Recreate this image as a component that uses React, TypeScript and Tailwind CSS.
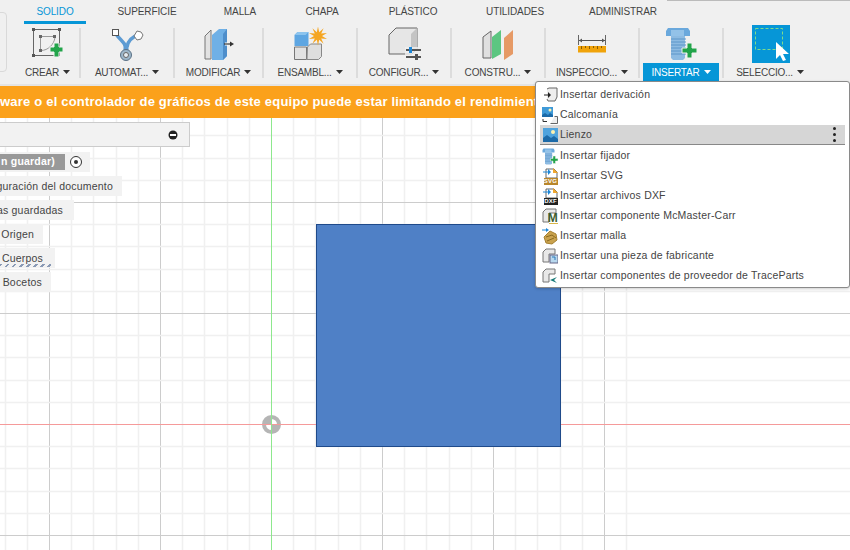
import React from "react";

const FONT = "font-['Liberation_Sans',Arial,sans-serif]";

function Caret({ white }: { white?: boolean }) {
  return (
    <svg width="7" height="4" viewBox="0 0 7 4" className="ml-[4px] shrink-0">
      <path d="M0 0h7L3.500 4z" fill={white ? "#fff" : "#333"} />
    </svg>
  );
}

function CreateIcon() {
  return (
    <svg width="34" height="34" viewBox="0 0 34 34">
      <rect x="2.500" y="2.500" width="26" height="26" fill="none" stroke="#666" />
      <path d="M9.500 10v14M9.500 9.500h13M10 23.500c7 0 13-6 14-13" fill="none" stroke="#999" />
      <rect x="1" y="1" width="3" height="3" fill="#555" />
      <rect x="27" y="1" width="3" height="3" fill="#555" />
      <rect x="1" y="27" width="3" height="3" fill="#555" />
      <rect x="8" y="8" width="3" height="3" fill="#666" />
      <rect x="8" y="22" width="3" height="3" fill="#666" />
      <rect x="22" y="8" width="3" height="3" fill="#666" />
      <path d="M22.500 18.500h4v-4h5v4h4v5h-4v5h-5v-5h-4z" transform="translate(-3.500 1.500)" fill="#22a44a" stroke="#f0f0f0" />
    </svg>
  );
}

function AutoIcon() {
  return (
    <svg width="34" height="36" viewBox="0 0 34 36">
      <path d="M6 8c4 6 8 7 10 13M28 9c-6 2-10 5-11 12" fill="none" stroke="#5d9bd3" strokeWidth="3.500" />
      <path d="M16 18v10" stroke="#5d9bd3" strokeWidth="5" />
      <rect x="2.500" y="3.500" width="6" height="6" fill="#fff" stroke="#555" />
      <path d="M27 5l4 1 2 3-2 4-4 1-3-4z" fill="#fff" stroke="#777" />
      <circle cx="16" cy="29" r="5.500" fill="#9db6c9" stroke="#5a7186" />
      <circle cx="16" cy="29" r="2.500" fill="#e6edf2" stroke="#666" />
    </svg>
  );
}

function ModifyIcon() {
  return (
    <svg width="30" height="34" viewBox="0 0 30 34">
      <path d="M1 9l6-6v29H1z" fill="#e2e2e2" stroke="#777" />
      <path d="M8 8l7-6h8v27l-4 4H8z" fill="#6fb0e6" />
      <path d="M19 7l4-5v27l-4 4z" fill="#4e8ecb" />
      <path d="M21 17h3" stroke="#fff" strokeWidth="3" />
      <path d="M20 17h7" stroke="#333" strokeWidth="1.200" />
      <path d="M26 14.500l4 2.500-4 2.500z" fill="#333" />
    </svg>
  );
}

function starPoints(cx: number, cy: number, r1: number, r2: number, n: number) {
  const pts: string[] = [];
  for (let i = 0; i < n * 2; i++) {
    const r = i % 2 === 0 ? r1 : r2;
    const a = (Math.PI * i) / n - Math.PI / 2;
    pts.push(`${(cx + r * Math.cos(a)).toFixed(1)},${(cy + r * Math.sin(a)).toFixed(1)}`);
  }
  return pts.join(" ");
}

function AssembleIcon() {
  return (
    <svg width="34" height="34" viewBox="0 0 34 34">
      <path d="M1.500 8l3-3h11v14H1.500z" fill="#5ea6e2" />
      <path d="M4.500 5h11l-3 3h-11z" fill="#8cc4ee" />
      <path d="M1.500 20h12v12.500H1.500z" fill="#e2e2e2" stroke="#777" />
      <path d="M14.500 20l3-3h11v12.500l-3 3h-11.500z" fill="#dedede" stroke="#888" />
      <polygon points={starPoints(25, 9, 9.500, 4, 10)} fill="#f5a623" />
    </svg>
  );
}

function ConfigIcon() {
  return (
    <svg width="34" height="34" viewBox="0 0 34 34">
      <path d="M2 8l7-7h21v21l-5 5H2z" fill="#e6e6e6" stroke="#666" />
      <path d="M24 7l6-6v21l-6 5z" fill="#c4c4c4" />
      <rect x="18" y="20" width="16" height="13" fill="#f0f0f0" opacity=".8" />
      <path d="M19 23h15M19 30h15" stroke="#555" strokeWidth="2" />
      <rect x="22" y="20" width="3" height="6" fill="#1e88d8" />
      <rect x="28" y="27" width="3" height="6" fill="#555" />
    </svg>
  );
}

function ConstructIcon() {
  return (
    <svg width="32" height="32" viewBox="0 0 32 32">
      <path d="M1 9l8-6v27H1z" fill="#e0e0e0" stroke="#666" />
      <path d="M10 9l9-7v24l-9 5z" fill="#5cc681" />
      <path d="M22 10l9-8v24l-9 6z" fill="#e69a66" />
    </svg>
  );
}

function InspectIcon() {
  return (
    <svg width="30" height="20" viewBox="0 0 30 20">
      <path d="M1.500 1v10M28.500 1v10" stroke="#666" />
      <path d="M2 6.500h26" stroke="#555" />
      <path d="M2 6.500l3-2v4zM28 6.500l-3-2v4z" fill="#555" />
      <rect x="1" y="12" width="28" height="6.500" fill="#f0a30a" />
      <path d="M4.500 12v3M8.500 12v2M12.500 12v3M16.500 12v2M20.500 12v3M24.500 12v2" stroke="#8a5c00" />
    </svg>
  );
}

function BoltIcon({ small }: { small?: boolean }) {
  return (
    <svg width={small ? 16 : 32} height={small ? 17 : 34} viewBox="0 0 32 34">
      <path d="M1 4l2-3h20l2 3v5H1z" fill="#6aa8dc" />
      <path d="M6 3h13v6H6z" fill="#93c2e8" />
      <path d="M6 9h14v22l-2 2H8l-2-2z" fill="#8dbbe2" />
      <path d="M6 12h15M6 15h15M6 18h15M6 21h15M6 24h15M6 27h15" stroke="#5d96c9" />
      <path d="M17 21h5v-5h5v5h5v5h-5v5h-5v-5h-5z" fill="#22a44a" stroke="#f0f0f0" />
    </svg>
  );
}

function SelectIcon() {
  return (
    <div className="w-[38px] h-[38px] bg-[#0696d7] ml-[2px]">
      <svg width="38" height="38" viewBox="0 0 38 38">
        <rect x="3.500" y="3.500" width="27" height="21" fill="none" stroke="#7fdc8a" strokeDasharray="3 2" />
        <path d="M24 17v17l4-4 3 6 3-1-3-6h6z" fill="#fff" />
      </svg>
    </div>
  );
}

function Tool({ w, label, icon, active, sep = true }: { w: string; label: string; icon: React.ReactNode; active?: boolean; sep?: boolean }) {
  return (
    <div className={`${w} pr-[2px] relative flex flex-col items-center h-full shrink-0`}>
      <div className="h-[39px] flex items-center justify-center">{icon}</div>
      {active ? (
        <div className="w-[76px] h-[18px] bg-[#0696d7] text-white flex items-center justify-center text-[10px] tracking-[-0.2px]">
          {label}
          <Caret white />
        </div>
      ) : (
        <div className="h-[18px] flex items-center justify-center text-[10px] tracking-[-0.2px] text-[#444]">
          {label}
          <Caret />
        </div>
      )}
      {sep && <div className="absolute right-0 top-[4px] h-[50px] w-[2px] bg-[#dcdcdc]" />}
    </div>
  );
}

function Row({ icon, label, active }: { icon: React.ReactNode; label: string; active?: boolean }) {
  return (
    <div className={`h-[20px] mx-[4px] flex items-center text-[10.500px] tracking-[0.2px] text-[#444] ${active ? "bg-[#d6d6d6] border-b border-[#888]" : ""}`}>
      <div className="w-[20px] h-[18px] flex items-center justify-center shrink-0">{icon}</div>
      <span className="flex-1">{label}</span>
      {active && (
        <div className="w-[3px] flex flex-col gap-[3px] mr-[9px]">
          <div className="w-[3px] h-[3px] rounded-full bg-[#222]" />
          <div className="w-[3px] h-[3px] rounded-full bg-[#222]" />
          <div className="w-[3px] h-[3px] rounded-full bg-[#222]" />
        </div>
      )}
    </div>
  );
}

const Derive = () => (
  <svg width="16" height="16" viewBox="0 0 16 16">
    <path d="M5 2l2-1h8v9l-2 4H6l-1-2" fill="#eee" stroke="#666" />
    <path d="M2 8h6" stroke="#222" />
    <path d="M6 5l3 3-3 3z" fill="#222" />
  </svg>
);
const Decal = () => (
  <svg width="17" height="17" viewBox="0 0 17 17">
    <rect x="0" y="0" width="11" height="10" fill="#3f9ad8" />
    <path d="M0 10V8l3-2 3 2 2-2 3 2v2z" fill="#1c6aa8" />
    <circle cx="8" cy="3" r="1.500" fill="#fff3b0" />
    <path d="M8.500 16.500h7v-7h-3" fill="#eee" stroke="#666" />
    <path d="M1 12v2.500h4" fill="none" stroke="#333" />
  </svg>
);
const Canvas = () => (
  <svg width="15" height="14" viewBox="0 0 15 14">
    <rect width="15" height="14" fill="#4fa3dd" />
    <path d="M0 14v-4l4-3 4 3 3-2 4 3v3z" fill="#1c6aa8" />
    <circle cx="10" cy="4" r="2" fill="#fff3b0" />
  </svg>
);
const FileIcon = ({ tag, bg }: { tag: string; bg: string }) => (
  <div className="relative w-[15px] h-[17px]">
    <svg width="15" height="10" viewBox="0 0 15 10" className="absolute top-0 left-0">
      <path d="M3 1h8l3 3v6H3z" fill="#fff" stroke="#666" />
      <path d="M10 0l5 5h-5z" fill="#f0a830" />
      <path d="M0 4h6" stroke="#1e88d8" />
      <path d="M5 1l3 3-3 3z" fill="#1e88d8" />
    </svg>
    <div className={`absolute bottom-0 left-[1px] right-0 h-[7px] ${bg} text-white text-[6px] leading-[7px] font-bold text-center`}>{tag}</div>
  </div>
);
const McMaster = () => (
  <div className="relative w-[16px] h-[16px]">
    <svg width="16" height="16" viewBox="0 0 16 16" className="absolute inset-0">
      <path d="M1 4l3-3h10v4H7v9H1z" fill="#e8e8e8" stroke="#777" />
      <path d="M7 15.500h9" stroke="#d9b84a" />
    </svg>
    <span className="absolute right-[0px] bottom-[0px] text-[12px] leading-[12px] font-bold text-[#3d5c2e]">M</span>
  </div>
);
const MeshIcon = () => (
  <svg width="16" height="17" viewBox="0 0 16 17">
    <path d="M8 3l6 3 1 6-5 4-6-1-2-6z" fill="#c9a24e" stroke="#a58030" />
    <path d="M4 9l6-2 4 3M5 13l7-3" stroke="#8a6a20" fill="none" />
    <path d="M0 2h5" stroke="#1e88d8" />
    <path d="M4 0l3 2-3 2z" fill="#1e88d8" />
  </svg>
);
const Maker = ({ teal }: { teal?: boolean }) => (
  <svg width="16" height="16" viewBox="0 0 16 16">
    <path d="M1 4l3-3h9v5H7v8H1z" fill="#e8e8e8" stroke="#777" />
    {teal ? (
      <path d="M8 12l7-3-3 3 3 3z" fill="#177a78" />
    ) : (
      <>
        <rect x="8" y="7" width="8" height="8" fill="#b8d8ee" stroke="#668" />
        <path d="M10 9h3v3" stroke="#2a78b8" fill="none" />
      </>
    )}
  </svg>
);

function TreeRow({ w, children }: { w: string; children: React.ReactNode }) {
  return (
    <div className={`${w} h-[20px] pt-[2px] bg-[#f2f2f2] flex items-center justify-end whitespace-nowrap text-[10.500px] tracking-[0.2px] text-[#444]`}>
      {children}
    </div>
  );
}

const XS = Array.from({ length: 30 }, (_, i) => Math.round(271 + (i - 13) * 22.2) + 0.5);
const YS = Array.from({ length: 30 }, (_, i) => Math.round(424 + (i - 15) * 22.2) + 0.5);

const TABS: [string, string][] = [
  ["SOLIDO", "w-[92px]"],
  ["SUPERFICIE", "w-[92px]"],
  ["MALLA", "w-[94px]"],
  ["CHAPA", "w-[70px]"],
  ["PLÁSTICO", "w-[112px]"],
  ["UTILIDADES", "w-[92px]"],
  ["ADMINISTRAR", "w-[124px]"],
];

export default function App() {
  return (
    <div className={`w-[850px] h-[550px] overflow-hidden relative flex flex-col bg-white ${FONT}`}>
      {/* tabs */}
      <div className="h-[24px] bg-[#f0f0f0] flex pl-[9px] text-[10px] tracking-[-0.1px] text-[#444] shrink-0 relative">
        {TABS.map(([t, w], i) => (
          <div key={t} className={`${w} h-[24px] pt-[5px] leading-[14px] text-center ${i === 0 ? "text-[#0696d7]" : ""}`}>{t}</div>
        ))}
        <div className="absolute left-[24px] top-[21px] w-[62px] h-[3px] bg-[#0696d7]" />
        <div className="absolute left-[667px] right-0 top-0 h-[1px] bg-[#bbbbbb]" />
      </div>
      {/* toolbar */}
      <div className="h-[62px] bg-[#f0f0f0] border-b-2 border-[#e4e4e4] flex shrink-0 relative">
        <div className="absolute left-[-10px] top-[-12px] w-[17px] h-[60px] border border-[#d9d9d9] rounded-[4px]" />
        <Tool w="w-[81px] pl-[16px]" label="CREAR" icon={<CreateIcon />} />
        <Tool w="w-[94px]" label="AUTOMAT..." icon={<AutoIcon />} />
        <Tool w="w-[89px]" label="MODIFICAR" icon={<ModifyIcon />} />
        <Tool w="w-[94px]" label="ENSAMBL..." icon={<AssembleIcon />} />
        <Tool w="w-[94px]" label="CONFIGUR..." icon={<ConfigIcon />} />
        <Tool w="w-[94px]" label="CONSTRU..." icon={<ConstructIcon />} />
        <Tool w="w-[94px]" label="INSPECCIO..." icon={<InspectIcon />} />
        <Tool w="w-[84px]" label="INSERTAR" icon={<BoltIcon />} active />
        <Tool w="w-[94px]" label="SELECCIO..." icon={<SelectIcon />} sep={false} />
      </div>
      {/* banner */}
      <div className="h-[32px] bg-[#fba11b] text-white font-bold text-[13px] tracking-[0.2px] flex items-center whitespace-nowrap overflow-hidden shrink-0">
        ware o el controlador de gráficos de este equipo puede estar limitando el rendimiento
      </div>
      {/* canvas */}
      <div className="flex-1 relative bg-white overflow-hidden">
        <svg width="850" height="432" viewBox="0 118 850 432" className="absolute inset-0">
          {XS.map((x, i) => (
            <line key={i} x1={x} x2={x} y1="118" y2="550" stroke={(i - 13) % 5 === 0 ? "#cccccc" : "#f0f0f0"} strokeWidth={(i - 13) % 5 === 0 ? 1 : 1.500} />
          ))}
          {YS.map((y, i) => (
            <line key={i} y1={y} y2={y} x1="0" x2="850" stroke={(i - 15) % 5 === 0 ? "#cccccc" : "#f0f0f0"} strokeWidth={(i - 15) % 5 === 0 ? 1 : 1.500} />
          ))}
          <line x1="0" x2="850" y1="424.500" y2="424.500" stroke="#f59a9a" />
          <line x1="271.500" x2="271.500" y1="118" y2="550" stroke="#8de88d" />
          <circle cx="271.500" cy="424.500" r="7.500" fill="none" stroke="#b5b5b5" strokeWidth="4" />
          <path d="M271.500 424.500v-7a7 7 0 0 0-7 7zM271.500 424.500v7a7 7 0 0 0 7-7z" fill="#b5b5b5" />
          <line x1="262" x2="281" y1="424.500" y2="424.500" stroke="#f59a9a" />
          <line x1="271.500" x2="271.500" y1="415" y2="434" stroke="#8de88d" />
          <rect x="316.500" y="224.500" width="244" height="222" fill="#4f80c6" stroke="#1f4a8a" />
        </svg>
        {/* browser */}
        <div className="absolute left-0 top-[4px] flex flex-col items-start">
          <div className="w-[190px] h-[25px] bg-[#f2f2f2] border border-l-0 border-[#cccccc] flex items-center justify-end pr-[11px]">
            <svg width="10" height="10" viewBox="0 0 10 10"><circle cx="5" cy="5" r="4.500" fill="#222" /><rect x="2" y="4" width="6" height="2" fill="#fff" /></svg>
          </div>
          <div className="mt-[5px] w-[90px] h-[20px] bg-[#f2f2f2] flex items-center justify-start">
            <div className="w-[65px] h-[16px] bg-[#999999] text-white font-bold text-[10.500px] tracking-[0.2px] flex items-center justify-end pr-[10px] whitespace-nowrap overflow-hidden shrink-0">n guardar)</div>
            <svg width="14" height="14" viewBox="0 0 14 14" className="ml-[4px] shrink-0"><circle cx="7" cy="7" r="5.500" fill="#fff" stroke="#333" /><circle cx="7" cy="7" r="2" fill="#333" /></svg>
          </div>
          <div className="mt-[4px]"><TreeRow w="w-[122px] pr-[9px]">guración del documento</TreeRow></div>
          <div className="mt-[4px]"><TreeRow w="w-[74px] pr-[11px]">as guardadas</TreeRow></div>
          <div className="mt-[4px]"><TreeRow w="w-[43px] pr-[9px]">Origen</TreeRow></div>
          <div className="mt-[4px] relative">
            <TreeRow w="w-[55px] pr-[12px]">Cuerpos</TreeRow>
            <div className="absolute left-0 bottom-[1px] w-[51px] h-[3px] bg-[repeating-linear-gradient(135deg,#8a9ab5_0,#8a9ab5_2px,transparent_2px,transparent_5px)]" />
          </div>
          <div className="mt-[4px]"><TreeRow w="w-[51px] pr-[9px]">Bocetos</TreeRow></div>
        </div>
      </div>
      {/* dropdown */}
      <div className="absolute left-[535px] top-[81px] w-[315px] h-[207px] bg-white border border-[#8a8a8a] rounded-[3px] shadow-[0_1px_3px_rgba(0,0,0,0.2)] pt-[3px]">
        <Row icon={<Derive />} label="Insertar derivación" />
        <Row icon={<Decal />} label="Calcomanía" />
        <Row icon={<Canvas />} label="Lienzo" active />
        <div className="h-[1px]" />
        <Row icon={<BoltIcon small />} label="Insertar fijador" />
        <Row icon={<FileIcon tag="SVG" bg="bg-[#b8862b]" />} label="Insertar SVG" />
        <Row icon={<FileIcon tag="DXF" bg="bg-[#222]" />} label="Insertar archivos DXF" />
        <Row icon={<McMaster />} label="Insertar componente McMaster-Carr" />
        <Row icon={<MeshIcon />} label="Insertar malla" />
        <Row icon={<Maker />} label="Insertar una pieza de fabricante" />
        <Row icon={<Maker teal />} label="Insertar componentes de proveedor de TraceParts" />
      </div>
    </div>
  );
}
